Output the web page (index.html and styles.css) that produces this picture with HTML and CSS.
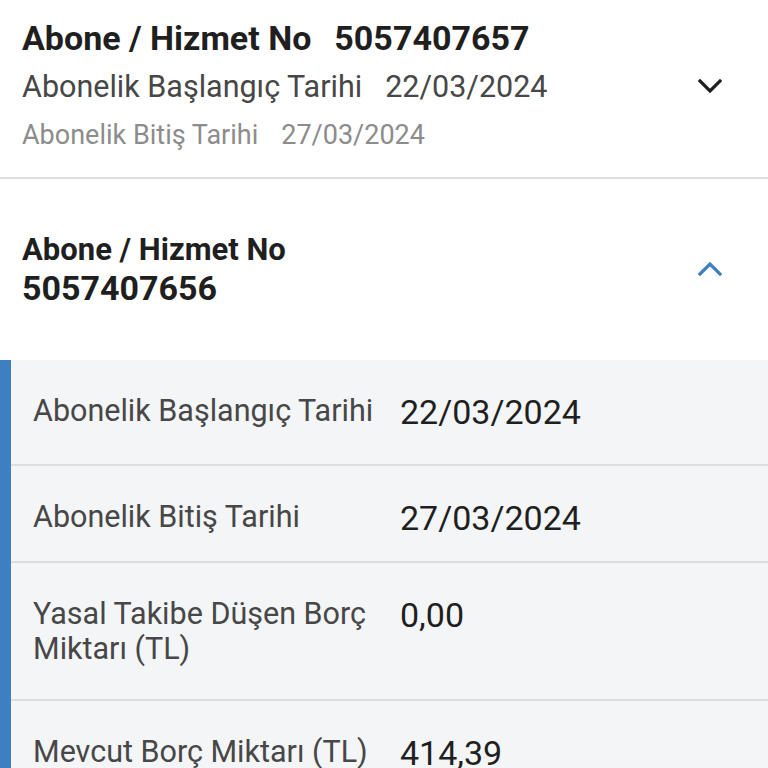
FILE: index.html
```html
<!DOCTYPE html>
<html lang="tr">
<head>
<meta charset="utf-8">
<link rel="stylesheet" href="styles.css">
</head>
<body>
<div class="page">
  <section class="card collapsed">
    <div class="card-text">
      <div class="title"><span>Abone / Hizmet No</span><span class="num">5057407657</span></div>
      <div class="sub"><span>Abonelik Başlangıç Tarihi</span><span class="val">22/03/2024</span></div>
      <div class="sub3"><span>Abonelik Bitiş Tarihi</span><span class="val">27/03/2024</span></div>
    </div>
    <svg class="chev down" width="28" height="28" viewBox="0 0 28 28"><path d="M4 9 L14 19 L24 9" fill="none" stroke="#1f1f1f" stroke-width="3.2" stroke-linecap="square"/></svg>
  </section>
  <section class="card open">
    <div class="open-head">
      <div class="head-text">
        <div class="title2">Abone / Hizmet No</div>
        <div class="num2">5057407656</div>
      </div>
      <svg class="chev" width="28" height="28" viewBox="0 0 28 28"><path d="M4 19 L14 9 L24 19" fill="none" stroke="#3d7fc0" stroke-width="3.2" stroke-linecap="square"/></svg>
    </div>
    <div class="details">
      <div class="row r1"><div class="label">Abonelik Başlangıç Tarihi</div><div class="value">22/03/2024</div></div>
      <div class="row r2"><div class="label">Abonelik Bitiş Tarihi</div><div class="value">27/03/2024</div></div>
      <div class="row r3"><div class="label">Yasal Takibe Düşen Borç Miktarı (TL)</div><div class="value">0,00</div></div>
      <div class="row r4"><div class="label">Mevcut Borç Miktarı (TL)</div><div class="value">414,39</div></div>
    </div>
  </section>
</div>
</body>
</html>
```
FILE: styles.css
```css
html, body {
  margin: 0;
  padding: 0;
  background: #ffffff;
  font-family: Roboto, "Noto Sans", sans-serif;
  overflow: hidden;
}
.page {
  width: 768px;
  height: 768px;
  overflow: hidden;
}
.card.collapsed {
  display: flex;
  align-items: center;
  justify-content: space-between;
  padding: 13px 44px 18px 22px;
  border-bottom: 2px solid #dedede;
}
.card-text {
  display: flex;
  flex-direction: column;
}
.title {
  font-size: 34px;
  font-weight: 700;
  color: #1f1f1f;
  line-height: 50px;
  display: flex;
  gap: 23px;
}
.sub {
  font-size: 30.5px;
  color: #474747;
  line-height: 48px;
  display: flex;
  gap: 23px;
}
.sub3 {
  font-size: 27px;
  color: #8c8c8c;
  line-height: 48px;
  display: flex;
  gap: 23px;
}
.chev {
  flex: none;
}
.open-head {
  display: flex;
  align-items: center;
  justify-content: space-between;
  padding: 52px 44px 53px 22px;
}
.title2 {
  font-size: 31px;
  font-weight: 700;
  color: #1f1f1f;
  line-height: 38px;
}
.num2 {
  font-size: 34px;
  font-weight: 700;
  color: #1f1f1f;
  line-height: 38px;
}
.details {
  background: #f4f5f7;
  border-left: 11px solid #3d7fc0;
}
.row {
  display: flex;
  padding: 33px 0 33px 22px;
  border-bottom: 2px solid #dcdddf;
}
.row.r2 {
  padding-bottom: 24px;
}
.label {
  width: 367px;
  flex: none;
  font-size: 30.5px;
  line-height: 35px;
  color: #474747;
}
.value {
  font-size: 34px;
  line-height: 38px;
  color: #1f1f1f;
}
```
